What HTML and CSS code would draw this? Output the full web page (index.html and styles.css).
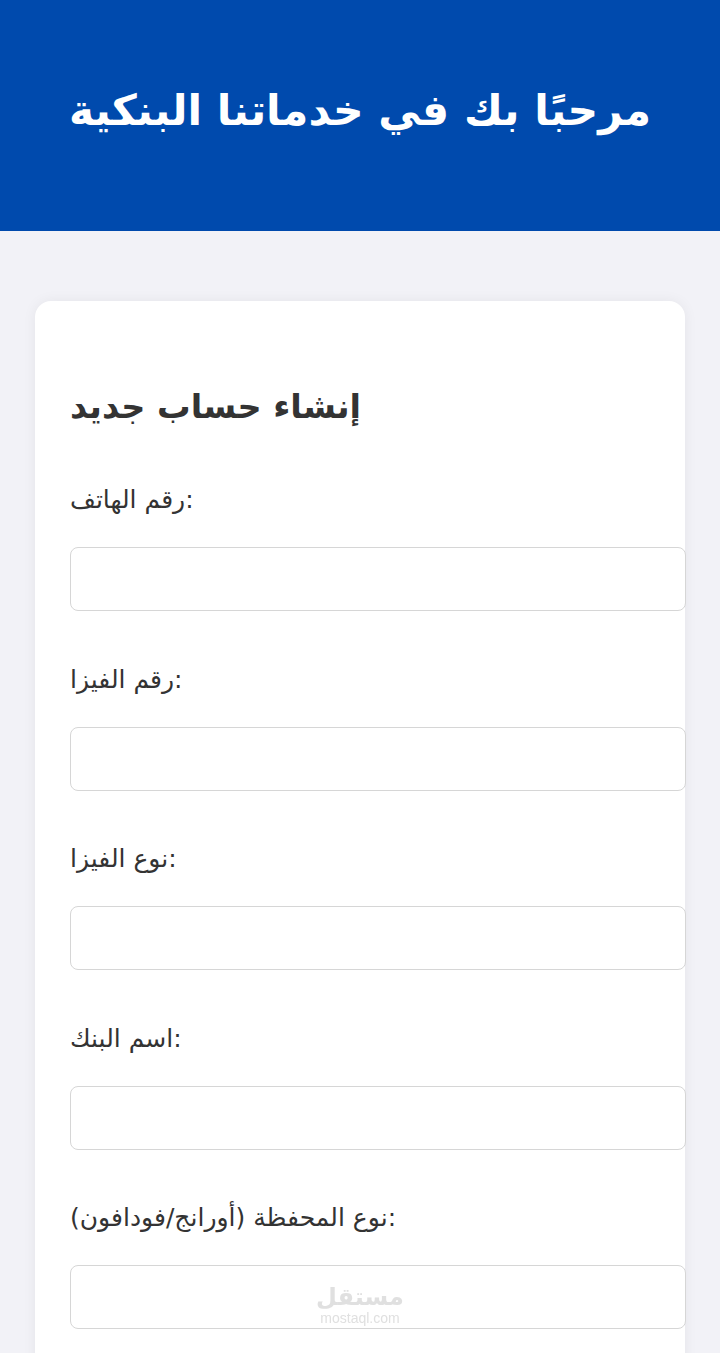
FILE: index.html
```html
<!DOCTYPE html>
<html lang="ar">
<head>
<meta charset="utf-8">
<title>خدماتنا البنكية</title>
<link rel="stylesheet" href="styles.css">
</head>
<body>
<header class="hero">
  <h1 class="hero-title">مرحبًا بك في خدماتنا البنكية</h1>
</header>
<main class="page">
  <section class="card">
    <h2 class="card-title">إنشاء حساب جديد</h2>
    <form class="form">
      <div class="field">
        <label class="field-label">رقم الهاتف:</label>
        <input class="field-input" type="text">
      </div>
      <div class="field">
        <label class="field-label">رقم الفيزا:</label>
        <input class="field-input" type="text">
      </div>
      <div class="field">
        <label class="field-label">نوع الفيزا:</label>
        <input class="field-input" type="text">
      </div>
      <div class="field">
        <label class="field-label">اسم البنك:</label>
        <input class="field-input" type="text">
      </div>
      <div class="field">
        <label class="field-label">نوع المحفظة (أورانج/فودافون):</label>
        <input class="field-input" type="text">
      </div>
    </form>
  </section>
</main>
<div class="watermark">
  <span class="wm-ar">مستقل</span>
  <span class="wm-en">mostaql.com</span>
</div>
</body>
</html>
```
FILE: styles.css
```css
html, body {
  margin: 0;
  padding: 0;
}
body {
  background: #f2f2f7;
  font-family: "DejaVu Sans", sans-serif;
  color: #333;
  height: 1353px;
  overflow: hidden;
}
.hero {
  background: #004aad;
  height: 231px;
  box-sizing: border-box;
  padding-bottom: 10px;
  display: flex;
  align-items: center;
  justify-content: center;
}
.hero-title {
  margin: 0;
  color: #fff;
  font-size: 42.5px;
  font-weight: bold;
}
.page {
  padding: 70px 35px 0;
}
.card {
  background: #fff;
  border-radius: 16px;
  box-shadow: 0 0 14px rgba(0,0,0,0.06);
  padding: 50px 35px 40px;
  min-height: 1100px;
}
.card-title {
  margin: 28px 0 45px;
  font-size: 33.5px;
  line-height: 56px;
  font-weight: bold;
  color: #333;
}
.form {
  display: flex;
  flex-direction: column;
}
.field {
  display: flex;
  flex-direction: column;
  margin-bottom: 48.5px;
}
.field-label {
  font-size: 25px;
  line-height: 40px;
  color: #333;
  margin-bottom: 27px;
}
.field-input {
  width: 100%;
  box-sizing: content-box;
  height: 40px;
  padding: 11px 17px;
  border: 1px solid #d6d6d6;
  border-radius: 8px;
  background: #fff;
  font-size: 24px;
}
.watermark {
  position: fixed;
  left: 0;
  right: 0;
  top: 1284px;
  display: flex;
  flex-direction: column;
  align-items: center;
  color: #e0e0e0;
}
.wm-ar {
  font-family: "DejaVu Sans", sans-serif;
  font-weight: bold;
  font-size: 24px;
  line-height: 26px;
}
.wm-en {
  font-family: "Liberation Sans", sans-serif;
  font-size: 14px;
  line-height: 16px;
}
```
